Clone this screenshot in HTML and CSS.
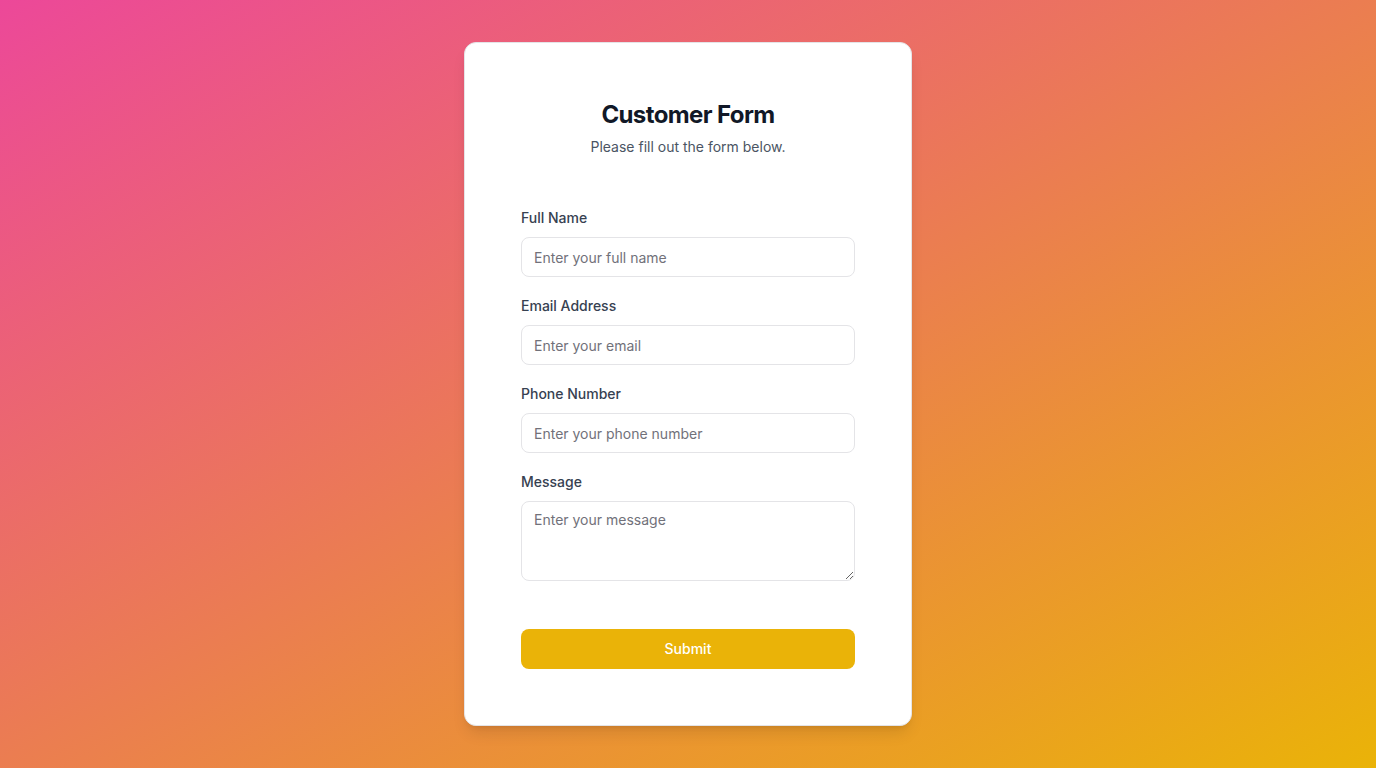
FILE: index.html
```html
<!DOCTYPE html>
<html lang="en">
<head>
<meta charset="utf-8">
<meta name="viewport" content="width=device-width, initial-scale=1">
<title>Customer Form</title>
<link rel="stylesheet" href="styles.css">
</head>
<body>
<main class="page">
  <form class="card">
    <header class="card-header">
      <h1 class="title">Customer Form</h1>
      <p class="subtitle">Please fill out the form below.</p>
    </header>
    <div class="fields">
      <div class="field">
        <label class="label" for="name">Full Name</label>
        <input class="control" id="name" type="text" placeholder="Enter your full name">
      </div>
      <div class="field">
        <label class="label" for="email">Email Address</label>
        <input class="control" id="email" type="email" placeholder="Enter your email">
      </div>
      <div class="field">
        <label class="label" for="phone">Phone Number</label>
        <input class="control" id="phone" type="tel" placeholder="Enter your phone number">
      </div>
      <div class="field">
        <label class="label" for="message">Message</label>
        <textarea class="control control-area" id="message" placeholder="Enter your message"></textarea>
      </div>
    </div>
    <button class="submit" type="submit">Submit</button>
  </form>
</main>
</body>
</html>
```
FILE: styles.css
```css
*, *::before, *::after {
  box-sizing: border-box;
  margin: 0;
}

body {
  font-family: Inter, "Liberation Sans", sans-serif;
  font-size: 14px;
  line-height: 20px;
  color: #0a0a0a;
}

.page {
  display: flex;
  align-items: center;
  justify-content: center;
  min-height: 100vh;
  background: linear-gradient(to bottom right, #ec4899, #eab308);
}

.card {
  width: 100%;
  max-width: 448px;
  padding: 56px;
  background: #ffffff;
  border: 1px solid #e4e4e7;
  border-radius: 12px;
  box-shadow: 0 10px 15px -3px rgba(0, 0, 0, 0.1), 0 4px 6px -4px rgba(0, 0, 0, 0.1);
}

.card-header {
  margin-bottom: 50px;
  text-align: center;
}

.title {
  font-size: 24px;
  line-height: 32px;
  font-weight: 700;
  letter-spacing: -0.025em;
  color: #111827;
}

.subtitle {
  margin-top: 6px;
  color: #4b5563;
}

.fields {
  display: flex;
  flex-direction: column;
  gap: 18px;
}

.field {
  display: flex;
  flex-direction: column;
  gap: 8px;
}

.label {
  line-height: 22px;
  font-weight: 500;
  color: #374151;
}

.control {
  width: 100%;
  height: 40px;
  padding: 8px 12px;
  font: inherit;
  color: inherit;
  background: #ffffff;
  border: 1px solid #e4e4e7;
  border-radius: 8px;
}

.control::placeholder {
  color: #71717a;
  opacity: 1;
}

.control-area {
  height: auto;
  min-height: 80px;
  resize: vertical;
}

.submit {
  width: 100%;
  height: 40px;
  margin-top: 48px;
  font: inherit;
  font-weight: 500;
  color: #ffffff;
  background: #eab308;
  border: 0;
  border-radius: 8px;
  cursor: pointer;
}
```
